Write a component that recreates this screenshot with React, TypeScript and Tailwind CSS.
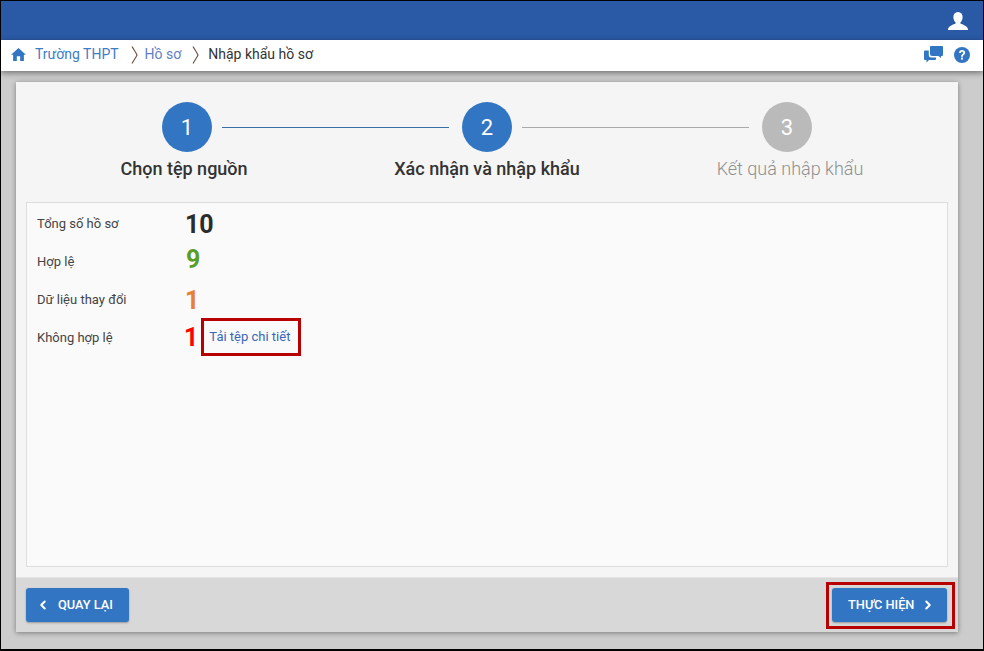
import { ChevronLeft, ChevronRight } from 'lucide-react'

function HomeIcon() {
  return (
    <svg viewBox="0 0 16 14" className="w-[15px] h-[13px] text-[#3276c3]" fill="currentColor">
      <path d="M8 0 L16 7.4 H13.8 V14 H9.8 V9 H6.2 V14 H2.2 V7.4 H0 Z" />
    </svg>
  )
}

function UserIcon() {
  return (
    <svg viewBox="0 0 20 18" className="w-[20px] h-[18px] text-white" fill="currentColor">
      <path d="M10 0 C13 0 14.6 2.2 14.6 5 C14.6 7.4 13.6 9.4 12.4 10.4 L12.4 11.6 C14.6 12.8 18.8 13.6 20 17 V18 H0 V17 C1.2 13.6 5.4 12.8 7.6 11.6 L7.6 10.4 C6.4 9.4 5.4 7.4 5.4 5 C5.4 2.2 7 0 10 0 Z" />
    </svg>
  )
}

function ChatIcon() {
  return (
    <svg viewBox="0 0 19 17" className="w-[19px] h-[17px] text-[#3276c3]" fill="currentColor">
      <path d="M6 1 a1 1 0 0 1 1-1 H18 a1 1 0 0 1 1 1 V9 a1 1 0 0 1-1 1 H17 V12 L14.5 10 H8 a2 2 0 0 1-2-2 Z" />
      <path d="M0 5.5 a1 1 0 0 1 1-1 H4.8 V9 a2.5 2.5 0 0 0 2.5 2.5 H12 V13 a1 1 0 0 1-1 1 H5 L2.5 16.5 V14 H1 a1 1 0 0 1-1-1 Z" />
    </svg>
  )
}

function HelpIcon() {
  return (
    <svg viewBox="0 0 16 16" className="w-[16px] h-[16px]">
      <circle cx="8" cy="8" r="8" fill="#3276c3" />
      <path d="M5 6 C5 4.2 6.4 3 8.1 3 C9.9 3 11.2 4.1 11.2 5.7 C11.2 7.7 8.9 7.8 8.9 9.7 H7.1 C7.1 7.2 9.2 7.1 9.2 5.8 C9.2 5.1 8.8 4.7 8.1 4.7 C7.4 4.7 7 5.2 6.9 6 Z" fill="#fff" />
      <rect x="7" y="10.6" width="1.9" height="2" fill="#fff" />
    </svg>
  )
}

function Crumb() {
  return (
    <svg viewBox="0 0 8 18" className="w-[8px] h-[18px] text-[#6b4a3a]" fill="none" stroke="currentColor" strokeWidth="1.1">
      <path d="M1 0.5 C3 4 5 6.5 6 9 C5 11.5 3 14 1 17.5" />
    </svg>
  )
}

function Circle({ n, color }: { n: number; color: string }) {
  return (
    <div className={`w-[50px] h-[50px] shrink-0 rounded-full text-white text-[22px] flex items-center justify-center ${color}`}>
      {n}
    </div>
  )
}

const stats = [
  { label: 'Tổng số hồ sơ', value: '10', color: 'text-[#2b2b2b] mt-[2px]' },
  { label: 'Hợp lệ', value: '9', color: 'text-[#5a9e2a] -mt-[4px] ml-[1px]' },
  { label: 'Dữ liệu thay đổi', value: '1', color: 'text-[#e8812f] mt-[2px]' },
  { label: 'Không hợp lệ', value: '1', color: 'text-[#ff0000] -ml-[1px]' },
]

export default function App() {
  return (
    <div className="w-[984px] h-[651px] overflow-hidden border border-black border-b-2 bg-[#cccccc] flex flex-col font-['Roboto',sans-serif]">
      <header className="h-[39px] shrink-0 bg-[#2a5aa5] flex items-center justify-end pr-[15px]">
        <UserIcon />
      </header>

      <nav className="h-[31px] shrink-0 bg-white shadow-[0_2px_6px_rgba(0,0,0,0.45)] flex items-center pl-[10px] pr-[13px] text-[14px] leading-[20px] relative">
        <span className="-mt-[3px]"><HomeIcon /></span>
        <span className="ml-[9px] -mt-[4px] text-[#3f7cc4]">Trường THPT</span>
        <span className="ml-[12px] -mt-[2px]"><Crumb /></span>
        <span className="ml-[6px] -mt-[4px] text-[#5f7fc4]">Hồ sơ</span>
        <span className="ml-[11px] -mt-[2px]"><Crumb /></span>
        <span className="ml-[8px] -mt-[4px] text-[#333]">Nhập khẩu hồ sơ</span>
        <div className="ml-auto -mt-[2px] flex items-center gap-[11px]">
          <ChatIcon />
          <HelpIcon />
        </div>
      </nav>

      <main className="flex-1 px-[15px] pt-[11px] pb-[18px]">
        <div className="h-[550px] w-[942px] bg-[#f5f5f5] shadow-[0_1px_5px_rgba(0,0,0,0.4)] flex flex-col">
          <div className="h-[120px] shrink-0 pt-[20px]">
            <div className="flex items-center pl-[146px]">
              <Circle n={1} color="bg-[#3276c3]" />
              <div className="ml-[10px] w-[227px] h-px bg-[#3a6ea8]" />
              <div className="ml-[13px]"><Circle n={2} color="bg-[#3276c3]" /></div>
              <div className="ml-[10px] w-[227px] h-px bg-[#aaaaaa]" />
              <div className="ml-[13px]"><Circle n={3} color="bg-[#bababa]" /></div>
            </div>
            <div className="mt-[6px] ml-[18px] grid grid-cols-[300px_306px_300px] text-[18px] leading-[22px] text-center whitespace-nowrap">
              <div className="font-medium text-[#333]">Chọn tệp nguồn</div>
              <div className="font-medium text-[#333]">Xác nhận và nhập khẩu</div>
              <div className="font-light text-[#8f8f8f]">Kết quả nhập khẩu</div>
            </div>
          </div>

          <div className="mx-[10px] h-[365px] shrink-0 bg-[#fafafa] border border-[#dddddd] pt-[2px] pl-[10px]">
            {stats.map((s, i) => (
              <div key={i} className="flex items-center h-[38px]">
                <span className="w-[148px] text-[13px] text-[#444]">{s.label}</span>
                <span className={`text-[25px] font-bold ${s.color}`}>{s.value}</span>
                {i === 3 && (
                  <span className="ml-[3px] -mt-[2px] w-[100px] h-[38px] border-[3px] border-[#b90000] flex items-center pl-[5px] text-[13px] text-[#3b66b5]">
                    Tải tệp chi tiết
                  </span>
                )}
              </div>
            ))}
          </div>

          <div className="mt-[10px] flex-1 bg-[#d8d8d8] border-t border-[#e4e4e4] flex items-center justify-between pl-[10px] pr-[3px]">
            <button className="w-[103px] h-[34px] rounded-[3px] bg-[#3276c3] text-white text-[12.8px] font-medium flex items-center pl-[10px] shadow-[0_1px_2px_rgba(0,0,0,0.3)]">
              <ChevronLeft size={14} strokeWidth={3.5} />
              <span className="ml-[8px]">QUAY LẠI</span>
            </button>
            <div className="w-[129px] h-[47px] border-[3px] border-[#b90000] flex items-center pl-[3px]">
              <button className="w-[115px] h-[34px] rounded-[3px] bg-[#3276c3] text-white text-[12.8px] font-medium flex items-center pl-[16px] shadow-[0_1px_2px_rgba(0,0,0,0.3)]">
                <span>THỰC HIỆN</span>
                <ChevronRight size={14} strokeWidth={3.5} className="ml-[7px]" />
              </button>
            </div>
          </div>
        </div>
      </main>
    </div>
  )
}
